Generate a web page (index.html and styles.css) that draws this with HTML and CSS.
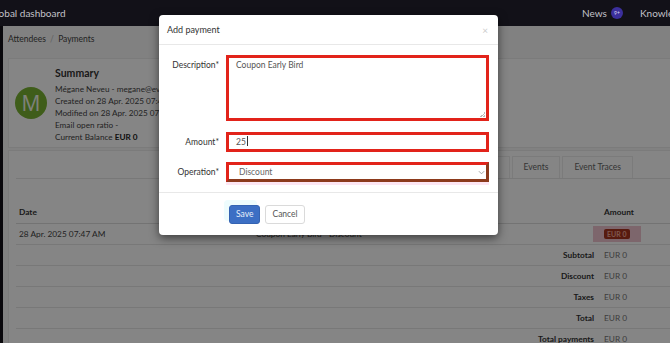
FILE: index.html
```html
<!DOCTYPE html>
<html lang="en">
<head>
<meta charset="utf-8">
<title>Add payment</title>
<link rel="stylesheet" href="styles.css">
</head>
<body>
<div class="app">
  <header class="topbar">
    <div class="brand">Global dashboard</div>
    <nav class="topnav">
      <span class="navitem">News <span class="nbadge">9+</span></span>
      <span class="navitem">Knowledge base</span>
    </nav>
  </header>
  <main class="main">
    <div class="crumbs">Attendees <span class="sep">/</span> Payments</div>
    <section class="card summary">
      <div class="avatar">M</div>
      <div class="info">
        <h2 class="info-title">Summary</h2>
        <p>Mégane Neveu - megane@eventbrite.com</p>
        <p>Created on 28 Apr. 2025 07:47 AM</p>
        <p>Modified on 28 Apr. 2025 07:47 AM</p>
        <p>Email open ratio -</p>
        <p>Current Balance <b>EUR 0</b></p>
      </div>
    </section>
    <section class="card details">
      <nav class="tabs">
        <span class="tab">Details</span>
        <span class="tab">Tickets</span>
        <span class="tab active">Payments</span>
        <span class="tab">Emails</span>
        <span class="tab">Events</span>
        <span class="tab">Event Traces</span>
      </nav>
      <table class="ptable">
        <colgroup><col class="c-date"><col class="c-desc"><col class="c-amt"></colgroup>
        <thead>
          <tr><th>Date</th><th></th><th class="amt">Amount</th></tr>
        </thead>
        <tbody>
          <tr><td>28 Apr. 2025 07:47 AM</td><td class="desc">Coupon Early Bird - Discount</td><td class="amt"><span class="hl"><span class="lbl-danger">EUR 0</span></span></td></tr>
          <tr class="sum"><td colspan="2">Subtotal</td><td class="amt">EUR 0</td></tr>
          <tr class="sum"><td colspan="2">Discount</td><td class="amt">EUR 0</td></tr>
          <tr class="sum"><td colspan="2">Taxes</td><td class="amt">EUR 0</td></tr>
          <tr class="sum"><td colspan="2">Total</td><td class="amt">EUR 0</td></tr>
          <tr class="sum"><td colspan="2">Total payments</td><td class="amt">EUR 0</td></tr>
        </tbody>
      </table>
    </section>
  </main>
  <div class="backdrop"></div>
  <div class="modal">
    <div class="modal-head">
      <span class="modal-title">Add payment</span>
      <span class="close">×</span>
    </div>
    <div class="modal-body">
      <div class="frow">
        <label class="flabel">Description*</label>
        <div class="field area">Coupon Early Bird<span class="grip"></span></div>
      </div>
      <div class="frow">
        <label class="flabel">Amount*</label>
        <div class="field">25<span class="caret"></span></div>
      </div>
      <div class="frow">
        <label class="flabel">Operation*</label>
        <div class="field select">Discount
          <svg class="chev" viewBox="0 0 8 5" width="7" height="5"><path d="M1 1l3 3 3-3" fill="none" stroke="#999" stroke-width="1"/></svg>
        </div>
      </div>
    </div>
    <div class="modal-foot">
      <span class="btn btn-primary">Save</span>
      <span class="btn btn-default">Cancel</span>
    </div>
  </div>
</div>
</body>
</html>
```
FILE: styles.css
```css
* { box-sizing: border-box; margin: 0; padding: 0; }
html, body { width: 670px; height: 343px; overflow: hidden; }
body {
  background: #121118;
  font-family: Lato, "Open Sans", sans-serif;
  font-size: 8px;
  color: #333;
}
.app { position: relative; width: 670px; height: 343px; overflow: hidden; }

/* top bar */
.topbar {
  height: 26px;
  display: flex;
  align-items: center;
  justify-content: space-between;
  background: #121118;
  color: #c2c1c8;
  white-space: nowrap;
}
.brand { font-size: 10px; margin-left: -11px; }
.topnav { display: flex; align-items: center; gap: 17px; margin-right: -42px; font-size: 10px; }
.navitem { display: flex; align-items: center; gap: 4px; }
.nbadge {
  width: 12px; height: 12px; border-radius: 50%;
  background: #3b2f9c; color: #d8d6f2;
  font-size: 5px; display: inline-flex; align-items: center; justify-content: center;
}

/* page */
.main {
  margin-left: 3px;
  width: 700px;
  height: 317px;
  background: #f7f7f7;
}
.crumbs { height: 26px; line-height: 26px; padding-left: 5px; color: #444; font-size: 8.5px; }
.sep { color: #bbb; margin: 0 2px; }
.card { background: #fff; border: 1px solid #ececec; margin-left: 5px; }
.summary {
  margin-top: 6px;
  height: 90px;
  display: flex;
  align-items: center;
  gap: 8px;
  padding: 0 6px;
}
.avatar {
  width: 32px; height: 32px; border-radius: 50%;
  background: #7ab333; color: #f2f7ea;
  font-size: 21px; display: flex; align-items: center; justify-content: center;
  font-family: "Open Sans", sans-serif;
}
.info { padding-top: 2px; font-size: 8.2px; }
.info-title { font-size: 10.5px; font-weight: 700; line-height: 14px; color: #333; margin-bottom: 3px; }
.info p { line-height: 12px; color: #444; }
.info b { color: #222; }

.details { margin-top: 2px; padding: 5px 7px 0; height: 240px; }
.tabs {
  display: flex; justify-content: flex-end; gap: 2px;
  padding-right: 62px;
  border-bottom: 1px solid #e6e6e6;
}
.tab {
  height: 22px; line-height: 21px; padding: 0 11px;
  border: 1px solid #ececec; border-bottom: none;
  color: #666; font-size: 8.5px;
}
.ptable { margin-top: 22px; width: 663px; table-layout: fixed; border-collapse: collapse; font-size: 8.3px; }
.c-date { width: 230px; }
.c-amt { width: 80px; }
.ptable th { height: 22px; text-align: left; padding: 0 3px; font-weight: 700; color: #333; border-bottom: 1px solid #ddd; }
.ptable td { height: 21px; padding: 0 3px; border-top: 1px solid #e6e6e6; color: #444; white-space: nowrap; }
.ptable .amt { padding-left: 5px; }
.ptable td.amt { color: #777; }
.ptable .desc { padding-left: 10px; }
.sum td:first-child { text-align: right; font-weight: 700; color: #333; padding-right: 5px; }
.hl { display: inline-block; padding: 3px 11px; margin-left: -11px; background: #f0c4cf; }
.lbl-danger {
  display: inline-block; background: #a8321d; color: #f0a898;
  font-size: 7px; font-weight: 700; line-height: 10px; padding: 0 3px; border-radius: 2px;
}

.backdrop {
  position: absolute; left: 0; right: 0; top: 26px; bottom: 0;
  background: rgba(0, 0, 0, 0.48);
}

/* modal */
.modal {
  position: absolute; left: 159px; top: 15px; width: 339px;
  background: #fff; border-radius: 4px;
  box-shadow: 0 3px 10px rgba(0, 0, 0, 0.55);
}
.modal-head {
  height: 30px; display: flex; align-items: center; justify-content: space-between;
  padding: 0 10px 0 8px; border-bottom: 1px solid #e8e8e8;
}
.modal-title { font-size: 9px; color: #333; }
.close { color: #ccc; font-size: 10px; }
.modal-body { padding: 10px 9px 10px 0; font-size: 8.5px; }
.frow { display: flex; gap: 7px; margin-bottom: 10px; }
.frow:first-child { margin-bottom: 11px; }
.frow:last-child { margin-bottom: 0; }
.flabel { width: 60px; flex: none; text-align: right; line-height: 20px; color: #333; }
.field {
  position: relative; flex: 1;
  height: 20px; line-height: 14px;
  border: 3px solid #e2231a;
  padding: 0 7px; color: #555;
  background: #fff;
}
.field.area { height: 66px; }
.grip {
  position: absolute; right: 1px; bottom: 1px; width: 5px; height: 5px;
  background: linear-gradient(135deg, transparent 50%, #bbb 50%, #bbb 62%, transparent 62%, transparent 75%, #bbb 75%);
}
.caret { display: inline-block; width: 1px; height: 10px; background: #333; vertical-align: -1px; margin-left: 1px; }
.field.select {
  padding-left: 10px; color: #666;
  border-color: #e2231a #8c3a1c #8c3a1c #e2231a;
  box-shadow: 0 3px 0 #fde6f3;
}
.chev { position: absolute; right: 1px; top: 5px; }

.modal-foot {
  border-top: 1px solid #e8e8e8;
  height: 43px;
  padding: 12px 0 0 70px;
  display: flex; gap: 5px; align-items: flex-start;
}
.btn {
  height: 19px; line-height: 17px; padding: 0 6px; border-radius: 3px;
  font-size: 8.5px; border: 1px solid transparent;
}
.btn-primary { background: #3c6fc4; border-color: #3463b2; color: #e8effa; box-shadow: -4px -4px 0 1px #eefcfd; }
.btn-default { background: #fff; border-color: #dadada; color: #555; }
```
